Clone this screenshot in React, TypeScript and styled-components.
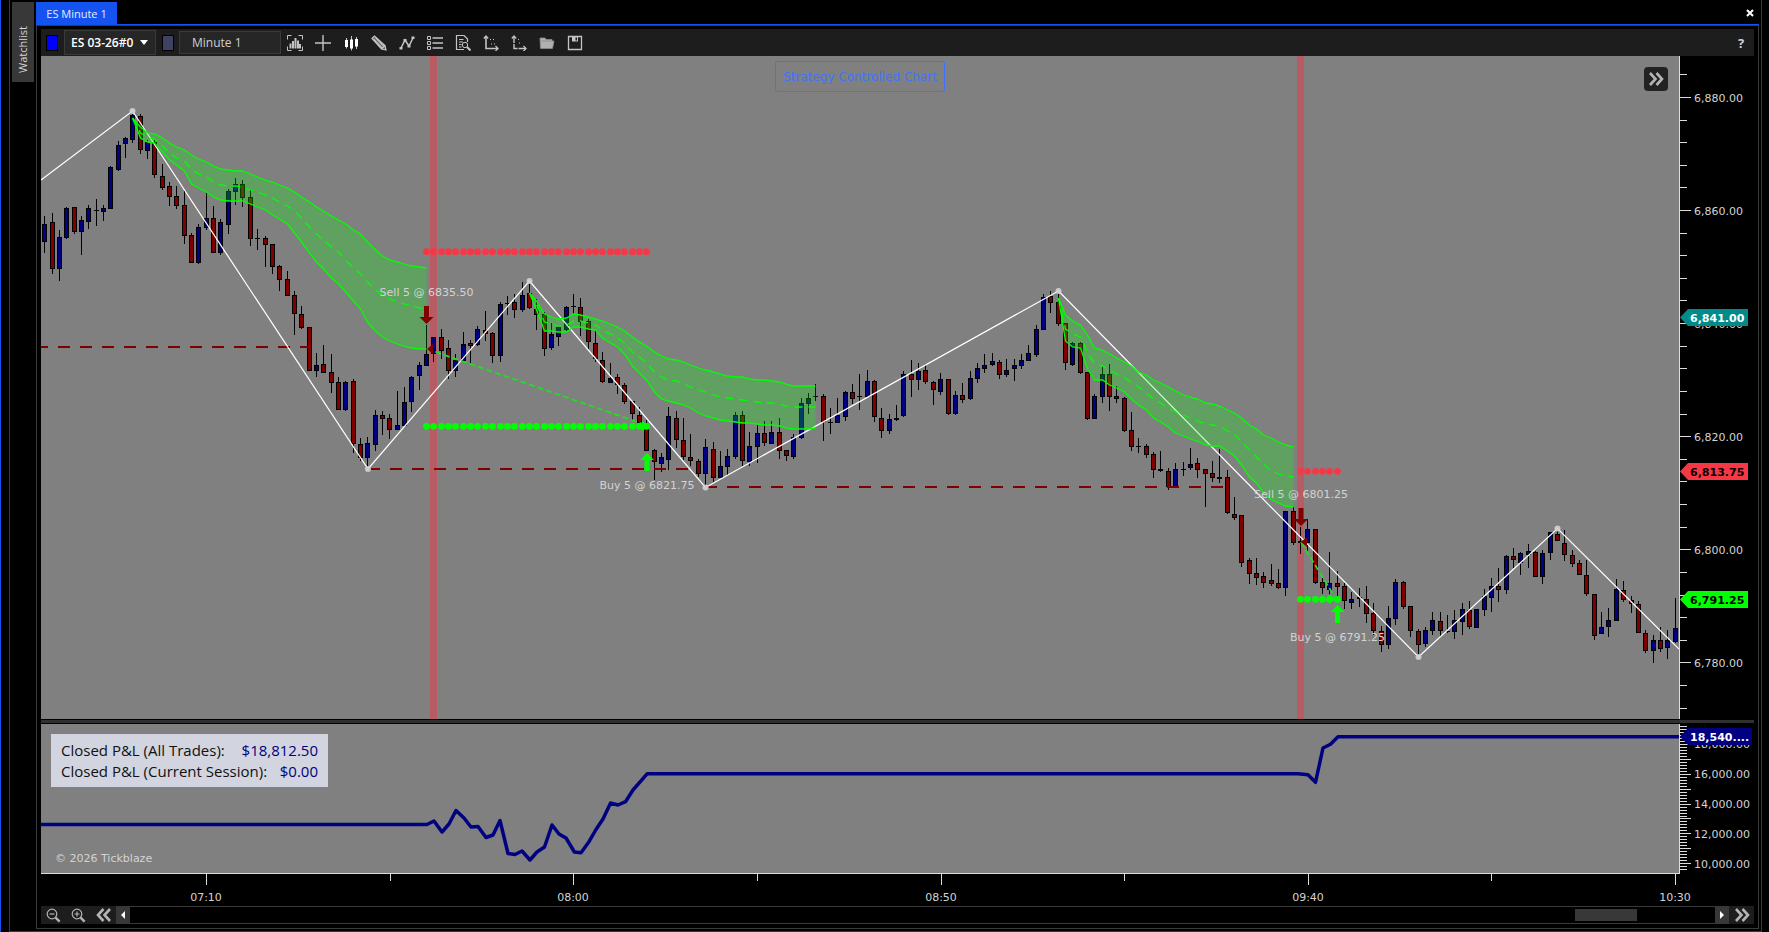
import React, { useLayoutEffect, useRef, useState } from 'react';
import styled, { createGlobalStyle } from 'styled-components';

const UI_FONT = '"Open Sans", "Noto Sans", sans-serif';
const CHART_FONT = '"DejaVu Sans", Verdana, sans-serif';

const color = {
  accent: '#1453f0',
  line: '#3a3a3a',
  panel: '#1d1d1d',
  raised: '#383838',
  plot: '#808080',
  axis: '#dcdcdc',
  label: '#d3d3d3',
  up: '#000080',
  down: '#800000',
  lime: '#00ff00',
  stop: '#f73746',
  teal: '#008b8b',
};

const GlobalStyle = createGlobalStyle`
  * { box-sizing: border-box; }
  html, body { margin: 0; background: #000; }
  button, input, select { font: inherit; color: inherit; border: 0; margin: 0; padding: 0; border-radius: 0; background: none; }
`;

/* ---------- data ---------- */

// The plots are designed on these sizes and stretch with the window.
const PLOT_W = 1638;
const PRICE_H = 663;
const PNL_H = 149;
const PRICE_TOP = 56;
const PNL_TOP = 724;
const PLOT_LEFT = 41;
const BAR_STEP = 7.344;
const FIRST_BAR = 3.7;

// One bar per minute: b = up, r = down, d = unchanged; then high, body top, body bottom, low.
const BARS = `
b216,224,242,253 r213,222,269,274 b230,237,269,281 b207,208,238,239 r207,207,232,234 b216,220,232,255 b205,208,222,229 d199,210,211,226
b205,208,212,221 b166,167,209,209 b141,145,170,171 b137,138,144,158 b112,115,140,143 r114,116,150,154 b140,142,151,159 r140,142,175,178
r164,176,188,190 r182,186,197,206 r186,196,206,209 r191,205,236,244 r233,235,263,263 b224,227,263,264 b193,218,228,230 r206,218,253,253
b219,222,253,255 b189,191,225,234 b178,184,192,205 r180,184,198,207 r190,197,239,246 d229,238,239,250 r236,238,245,267 r244,244,267,274
r265,266,280,291 r271,279,296,296 r291,295,314,335 r306,314,328,329 r327,327,371,371 b353,365,371,377 r345,364,373,373 r354,372,383,393
r377,382,410,410 b381,382,410,411 r379,381,444,453 r438,444,458,461 b437,443,458,469 b410,415,445,451 r411,415,419,435 r414,418,430,439
b391,425,430,430 b387,402,426,426 b376,377,402,412 b362,365,376,390 b325,354,366,366 b337,337,354,362 r329,337,351,359 r340,348,371,379
b354,360,371,377 b332,344,361,361 r340,343,346,363 b326,329,345,346 r311,330,334,341 r332,333,356,363 b302,304,356,362 d296,303,304,315
r294,302,310,318 b282,295,310,312 r281,293,308,309 r299,309,315,330 r312,314,349,356 b323,334,348,350 b326,327,337,346 b306,307,330,332
d294,306,307,314 r298,307,322,336 r319,321,342,349 r330,343,359,362 r352,360,382,383 b363,378,383,383 r374,377,385,394 r383,385,402,404
r401,401,414,421 r407,415,423,423 r420,427,451,451 r449,450,462,480 b453,457,464,472 b407,416,460,470 r411,418,440,448 r418,440,457,460
r434,457,461,466 r459,461,474,477 b439,447,474,487 r442,449,478,482 b451,466,478,478 b449,456,467,475 b412,415,457,459 r411,415,461,466
b432,446,462,466 b425,433,447,463 r421,433,443,446 b421,432,444,444 r418,432,451,459 r450,450,456,461 b434,437,457,459 b398,403,438,439
b393,398,404,414 d384,396,397,401 r394,396,422,441 d408,422,423,434 b398,415,423,423 b391,392,417,421 r384,392,399,404 d374,396,397,410
b370,381,397,397 r380,381,417,422 r408,418,431,438 b414,419,431,434 d405,418,420,421 b371,374,416,417 r360,374,380,397 b363,371,380,390
r364,370,382,384 r381,382,390,405 b373,379,392,395 r379,379,414,415 b391,395,414,415 r383,395,400,403 b371,378,399,400 b363,368,379,383
b354,365,369,373 b353,361,365,366 r360,362,375,379 b359,370,375,377 b359,365,369,381 b354,360,366,369 b345,353,361,361 b325,329,355,357
b294,297,330,330 r291,296,303,313 r291,302,324,326 r323,323,363,370 b342,343,365,366 r342,343,373,374 r372,372,419,420 b394,396,419,419
b367,374,397,403 r364,374,397,411 r386,396,399,403 r397,398,431,432 r412,430,447,451 d438,446,447,453 r444,446,455,458 r452,454,470,478
d451,469,471,472 r468,471,487,490 b463,469,487,487 d462,469,470,476 b448,464,468,470 r458,463,470,478 r469,469,474,507 r461,473,478,482
d449,477,479,483 r470,477,513,514 r497,514,518,520 r515,515,563,567 r558,560,574,584 r558,573,578,585 r572,576,583,588 r564,580,584,586
r569,583,588,589 b511,511,588,596 r507,511,543,545 d527,541,543,554 b519,529,543,553 r529,529,583,584 r578,582,588,594 b552,583,590,596
r571,583,587,597 r583,586,601,609 b592,599,603,609 b588,597,599,607 r586,599,614,623 r603,613,631,635 r626,631,645,652 b606,618,645,649
b579,582,619,625 r581,582,607,609 r606,606,631,637 r629,631,645,655 b627,630,644,647 b612,620,631,635 r612,621,631,637 d615,631,632,633
b610,620,632,639 b603,609,622,635 r601,610,627,629 b609,609,628,628 b589,596,610,616 b578,586,598,612 r568,586,590,602 b555,556,590,594
r548,556,560,568 b552,553,563,575 b544,551,555,568 r551,552,577,577 b550,553,577,584 b532,532,553,560 r529,534,541,541 r530,543,555,561
r550,555,564,567 r560,563,575,575 r560,575,594,596 r594,594,636,640 b612,627,634,634 b608,620,627,637 b579,589,621,621 r581,590,600,602
r596,600,604,613 r601,604,633,633 r630,633,651,653 b635,640,651,663 r627,640,649,652 b630,640,648,659 b598,628,642,643
`
  .trim()
  .split(/\s+/)
  .map((s) => ({ kind: s[0], y: s.slice(1).split(',').map(Number) }));

// Anchored VWAP bands: upper, middle and lower level for every bar from the anchor on.
const BANDS = [
  {
    from: 12,
    rows: `118,118,118 127,133,138 133,137,142 134,139,143 138,146,152 143,153,160 147,158,165 150,161,171 155,169,184 159,174,188
    162,177,192 166,182,197 169,185,200 170,186,201 171,186,201 171,187,201 174,190,204 177,192,207 180,195,210 182,198,215
    185,202,219 188,206,224 192,211,233 197,218,242 202,227,253 207,234,262 211,240,269 216,247,278 220,252,284 224,260,292
    230,268,301 234,274,309 242,282,322 250,290,331 256,295,337 260,299,341 262,302,344 264,304,346 266,306,348 267,308,349 268,309,349`,
  },
  {
    from: 66,
    rows: `293,293,293 301,305,310 314,322,331 317,324,331 319,326,332 318,325,332 314,321,327 315,321,327 317,323,329 319,325,330
    321,330,338 324,334,343 327,338,347 331,343,354 337,352,366 342,357,373 346,363,380 352,372,392 356,377,399 359,380,401
    360,381,403 362,384,405 365,387,408 368,390,413 370,392,416 372,395,418 374,397,420 376,398,421 377,399,422 377,400,423
    379,401,423 380,402,424 380,403,425 381,403,425 382,404,426 384,406,428 386,407,429 386,407,429 386,407,429 386,407,428`,
  },
  {
    from: 138,
    rows: `298,298,298 315,329,341 321,334,347 325,337,348 335,352,369 348,364,380 350,366,380 354,370,385 358,374,388 362,378,392
    366,382,399 372,387,405 375,393,410 380,399,418 383,403,422 387,408,427 391,412,433 395,415,436 397,418,439 399,421,441
    403,424,445 404,425,446 406,426,446 410,431,451 413,434,456 418,442,465 425,450,477 429,457,483 435,464,493 438,471,500
    442,474,503 445,476,506 447,477,507`,
  },
].map((b) => ({ from: b.from, rows: b.rows.trim().split(/\s+/).map((r) => r.split(',').map(Number)) }));

type Pt = [number, number];

const SWINGS: Pt[] = [
  [41, 180], [132.5, 111], [368, 469], [529.5, 281], [705.5, 487.5], [1058.5, 291], [1418.5, 657], [1557.5, 528.5], [1679, 649],
];

const SUPPORTS = [
  { x1: 41, x2: 309, y: 347, offset: 5 },
  { x1: 368, x2: 692, y: 469, offset: 0 },
  { x1: 705, x2: 1223, y: 487, offset: 0 },
];

const SESSIONS = [430, 1297];

const LEVELS = [
  { from: 52, to: 82, y: 251.7, fill: color.stop },
  { from: 52, to: 82, y: 426.3, fill: color.lime },
  { from: 171, to: 176, y: 471.3, fill: color.stop },
  { from: 171, to: 176, y: 599.3, fill: color.lime },
];

const TRADES = [
  { side: 'sell', text: 'Sell 5 @ 6835.50', x: 426.5, tip: 324, textY: 296 },
  { side: 'buy', text: 'Buy 5 @ 6821.75', x: 647, tip: 453, textY: 489 },
  { side: 'sell', text: 'Sell 5 @ 6801.25', x: 1301, tip: 526, textY: 498 },
  { side: 'buy', text: 'Buy 5 @ 6791.25', x: 1337.5, tip: 605, textY: 641 },
];

const TRADE_LINES = [
  { a: [427, 349] as Pt, b: [649, 426] as Pt },
  { a: [1301, 542] as Pt, b: [1336, 599] as Pt },
];

const PNL_LINE: Pt[] = [
  [41, 824.5], [427, 824.5], [434, 821], [442, 832], [449, 824], [456, 810.5], [464, 818], [471, 827], [478, 826.5], [486, 837.5],
  [493, 835], [500, 820.5], [508, 853.5], [515, 854.5], [522, 851], [530, 860], [537, 852], [544.5, 847], [552, 825], [559, 834],
  [566, 838], [574.4, 852], [581, 852.7], [589, 841.7], [595.7, 830], [603, 819], [610.6, 803], [618, 805], [625.5, 801.7],
  [633, 790], [647.3, 773.7], [1298, 773.7], [1308, 774.7], [1315.5, 782.3], [1323, 748], [1330.5, 744.3], [1338, 736.7], [1679, 736.7],
];

const TIMES = ['07:10', '08:00', '08:50', '09:40', '10:30'];

/* ---------- layout ---------- */

const Desktop = styled.div`
  display: flex;
  height: 100vh;
  min-height: 480px;
  padding: 0 7px 0 8px;
  border-left: 1px solid ${color.accent};
  background: #000;
  font-family: ${UI_FONT};
`;

const Shell = styled.div`
  flex: 1;
  min-width: 0;
  display: flex;
  padding: 2px 2px 2px;
  border: 1px solid ${color.line};
  border-top: 0;
`;

const Rail = styled.nav`
  width: 24px;
  flex: none;
`;

const RailTab = styled.button`
  width: 22px;
  height: 80px;
  background: ${color.raised};
  color: ${color.label};
  font-size: 11px;
  line-height: 22px;
  writing-mode: vertical-rl;
  transform: rotate(180deg);
  text-align: left;
  padding-top: 9px;
`;

const Main = styled.main`
  flex: 1;
  min-width: 0;
  display: flex;
  flex-direction: column;
`;

const TabStrip = styled.div`
  height: 23px;
  flex: none;
  display: flex;
  justify-content: space-between;
  border-bottom: 1px solid ${color.accent};
`;

const Tab = styled.button`
  width: 81px;
  background: ${color.accent};
  color: #e8ecff;
  font-size: 11px;
`;

const CloseButton = styled.button`
  width: 18px;
  display: grid;
  place-items: center;
  color: #fff;
`;

const Frame = styled.section`
  flex: 1;
  min-height: 0;
  display: flex;
  flex-direction: column;
  padding: 3px 4px 4px;
  border: 1px solid ${color.line};
`;

const Toolbar = styled.div`
  height: 27px;
  flex: none;
  display: flex;
  align-items: center;
  padding-left: 5px;
  background: ${color.panel};
  color: #cfcfcf;
`;

const Swatch = styled.button<{ $fill: string }>`
  width: 12px;
  height: 16px;
  border: 1px solid #000;
  background: ${(p) => p.$fill};
`;

const Picker = styled.label`
  position: relative;
  display: flex;
  align-items: center;
  width: 92px;
  height: 25px;
  margin: 0 6px;
  border: 1px solid ${color.line};
  background: #262626;
`;

const PickerSelect = styled.select`
  appearance: none;
  width: 100%;
  height: 100%;
  padding-left: 6px;
  color: #fff;
  font-size: 12px;
  font-weight: 600;
`;

const Caret = styled.svg`
  position: absolute;
  right: 7px;
  pointer-events: none;
`;

const Interval = styled.input`
  width: 102px;
  height: 23px;
  margin: 0 0 0 5px;
  padding-left: 12px;
  border: 1px solid ${color.line};
  background: #262626;
  font-size: 12px;
`;

const IconRow = styled.div`
  flex: 1;
  display: flex;
`;

const IconButton = styled.button`
  width: 28px;
  height: 27px;
  display: grid;
  place-items: center;
  color: #c4c4c4;
`;

const HelpButton = styled.button`
  width: 26px;
  font-size: 13px;
  font-weight: 700;
`;

const ChartGrid = styled.div`
  flex: 1;
  min-height: 0;
  display: grid;
  grid-template-columns: minmax(0, 1fr) 75px;
  grid-template-rows: minmax(0, 663fr) 5px minmax(0, 149fr) 33px;
`;

const Plot = styled.div`
  position: relative;
  min-width: 0;
  min-height: 0;
  overflow: hidden;
  background: ${color.plot};
`;

const Scale = styled.div`
  min-height: 0;
  overflow: hidden;
  border-left: 1px solid ${color.axis};
`;

const TimeScale = styled.div`
  grid-column: 1 / -1;
  overflow: hidden;
`;

const Splitter = styled.div`
  grid-column: 1 / -1;
  border: solid #000;
  border-width: 1px 0;
  background: #303030;
`;

const Drawing = styled.svg`
  display: block;
  width: 100%;
  height: 100%;
  font-family: ${CHART_FONT};
  font-size: 11px;
`;

const Banner = styled.div`
  position: absolute;
  top: 5px;
  left: 50%;
  transform: translateX(-50%);
  width: 170px;
  height: 31px;
  border: 1px solid #3f73ff;
  border-radius: 2px;
  color: #3f73ff;
  font: 12px/31px ${CHART_FONT};
  text-align: center;
  white-space: nowrap;
`;

const ExpandButton = styled.button`
  position: absolute;
  top: 11px;
  right: 11px;
  width: 24px;
  height: 24px;
  border-radius: 4px;
  background: #222;
  color: #b4b4b4;
  display: grid;
  place-items: center;
`;

const Summary = styled.dl`
  position: absolute;
  top: 10px;
  left: 10px;
  width: 277px;
  margin: 0;
  padding: 6px 10px 5px;
  background: #d2d5df;
  color: #111;
  font-size: 15px;
  line-height: 21px;
`;

const SummaryRow = styled.div`
  display: flex;
  justify-content: space-between;
  white-space: nowrap;

  dd { margin: 0; color: ${color.up}; }
`;

const Copyright = styled.small`
  position: absolute;
  left: 14px;
  bottom: 7px;
  color: ${color.label};
  font: 11px/14px ${CHART_FONT};
`;

const ScrollRow = styled.div`
  height: 18px;
  flex: none;
  display: flex;
`;

const ScrollTool = styled.button<{ $raised?: boolean }>`
  width: ${(p) => (p.$raised ? 14 : 25)}px;
  flex: none;
  display: grid;
  place-items: center;
  background: ${(p) => (p.$raised ? color.raised : color.panel)};
  color: ${(p) => (p.$raised ? '#fff' : '#b4b4b4')};
`;

const Track = styled.div`
  flex: 1;
  display: flex;
  justify-content: flex-end;
  align-items: center;
  padding-right: 78px;
  border: solid ${color.line};
  border-width: 1px 0;
`;

const Thumb = styled.div`
  width: 62px;
  height: 12px;
  background: ${color.raised};
`;

/* ---------- drawing helpers ---------- */

function useSize(w: number, h: number) {
  const ref = useRef<HTMLDivElement>(null);
  const [size, setSize] = useState({ w, h });
  useLayoutEffect(() => {
    const el = ref.current;
    if (!el) return;
    const read = () => setSize({ w: el.clientWidth, h: el.clientHeight });
    read();
    const watcher = new ResizeObserver(read);
    watcher.observe(el);
    return () => watcher.disconnect();
  }, []);
  return { ref, ...size };
}

const toPoints = (pts: Pt[]) => pts.map((p) => p.join(',')).join(' ');

function PricePlot() {
  const { ref, w, h } = useSize(PLOT_W, PRICE_H);
  const kx = w / PLOT_W;
  const ky = h / PRICE_H;
  const x = (v: number) => (v - PLOT_LEFT) * kx;
  const y = (v: number) => (v - PRICE_TOP) * ky;
  const barX = (i: number) => Math.floor((FIRST_BAR + i * BAR_STEP) * kx);
  const px = (v: number) => Math.round(y(v));

  return (
    <Plot ref={ref}>
      <Drawing role="img" aria-label="ES 03-26 one minute price chart">
        {SESSIONS.map((s) => (
          <rect key={s} x={x(s)} y={0} width={7} height={h} fill="#f23645" fillOpacity={0.5} />
        ))}
        {BARS.map((bar, i) => {
          const [hi, top, bottom, lo] = bar.y.map(px);
          const cx = barX(i);
          const bodyH = Math.max(1, bottom - top);
          return (
            <g key={i} shapeRendering="crispEdges">
              <rect x={cx} y={hi} width={1} height={Math.max(1, lo - hi)} fill="#000" />
              <rect x={cx - 2} y={top} width={5} height={bodyH} fill="#000" />
              {bar.kind !== 'd' && bodyH > 2 && (
                <rect x={cx - 1} y={top + 1} width={3} height={bodyH - 2} fill={bar.kind === 'b' ? color.up : color.down} />
              )}
            </g>
          );
        })}
        {SUPPORTS.map((s) => (
          <line key={s.y} x1={x(s.x1)} x2={x(s.x2)} y1={px(s.y)} y2={px(s.y)} stroke={color.down} strokeWidth={2} strokeDasharray="12 10" strokeDashoffset={s.offset} />
        ))}
        <polyline points={toPoints(SWINGS.map(([a, b]) => [x(a), y(b)]))} fill="none" stroke="#fff" strokeWidth={1.2} />
        {SWINGS.slice(1, -1).map(([a, b]) => (
          <circle key={a} cx={x(a)} cy={y(b)} r={3} fill={color.label} fillOpacity={0.9} />
        ))}
        {BANDS.map((band) => {
          const edge = (k: number) => band.rows.map((r, i): Pt => [barX(band.from + i) + 0.5, y(r[k])]);
          return (
            <g key={band.from} fill="none" stroke={color.lime} strokeWidth={1.3}>
              <polygon points={toPoints([...edge(0), ...edge(2).reverse()])} fill={color.lime} fillOpacity={0.25} stroke="none" />
              <polyline points={toPoints(edge(0))} />
              <polyline points={toPoints(edge(2))} />
              <polyline points={toPoints(edge(1))} strokeDasharray="8 6" />
            </g>
          );
        })}
        {LEVELS.map((l) =>
          Array.from({ length: l.to - l.from + 1 }, (_, n) => (
            <circle key={`${l.y}-${n}`} cx={barX(l.from + n) + 0.5} cy={y(l.y)} r={3.4} fill={l.fill} />
          )),
        )}
        {TRADE_LINES.map(({ a, b }) => {
          const [ax, ay, bx, by] = [x(a[0]), y(a[1]), x(b[0]), y(b[1])];
          return (
            <g key={a[0]}>
              <line x1={ax} y1={ay} x2={bx} y2={by} stroke="#22dd22" strokeWidth={1.8} strokeDasharray="6 3" />
              <polygon points={`${ax},${ay} ${ax + 6},${ay - 5} ${ax + 6},${ay + 5}`} fill={color.down} />
              <polygon points={`${bx},${by} ${bx - 7},${by - 5} ${bx - 7},${by + 5}`} fill={color.lime} />
            </g>
          );
        })}
        {TRADES.map((t) => {
          const cx = x(t.x);
          const d = t.side === 'sell' ? -1 : 1;
          const ty = y(t.tip);
          return (
            <g key={t.text}>
              <path
                d={`M${cx} ${ty}l7 ${d * 7}h-4.5v${d * 11}h-5v${d * -11}h-4.5z`}
                fill={t.side === 'sell' ? color.down : color.lime}
              />
              <text x={cx} y={y(t.textY)} fill={color.label} textAnchor="middle">{t.text}</text>
            </g>
          );
        })}
      </Drawing>
      <Banner>Strategy Controlled Chart</Banner>
      <ExpandButton aria-label="Show panel"><Chevrons /></ExpandButton>
    </Plot>
  );
}

function PriceTag({ y, text, fill, ink = '#000', width = 68 }: { y: number; text: string; fill: string; ink?: string; width?: number }) {
  const t = Math.round(y) - 8;
  return (
    <g>
      <path d={`M0 ${t + 8.5}L8 ${t}H${width}V${t + 17}H8z`} fill={fill} />
      <text x={10} y={t + 13} fill={ink} fontWeight={700}>{text}</text>
    </g>
  );
}

function PriceScale() {
  const { ref, h } = useSize(74, PRICE_H);
  const ky = h / PRICE_H;
  const y = (price: number) => Math.floor((41.4 + (6880 - price) * 5.655) * ky);
  const ticks = Array.from({ length: 29 }, (_, i) => 6884 - i * 4);
  return (
    <Scale ref={ref}>
      <Drawing role="img" aria-label="Price scale">
        {ticks.map((p) => (
          <rect key={p} x={0} y={y(p)} width={p % 20 ? 7 : 11} height={1} fill={color.axis} />
        ))}
        {ticks.filter((p) => p % 20 === 0).map((p) => (
          <text key={p} x={14} y={y(p) + 5} fill={color.label}>{`6,${p - 6000}.00`}</text>
        ))}
        <PriceTag y={261 * ky} text="6,841.00" fill={color.teal} ink="#fff" />
        <PriceTag y={415 * ky} text="6,813.75" fill={color.stop} />
        <PriceTag y={543 * ky} text="6,791.25" fill={color.lime} />
      </Drawing>
    </Scale>
  );
}

function PnlPlot() {
  const { ref, w, h } = useSize(PLOT_W, PNL_H);
  const pts = PNL_LINE.map(([a, b]): Pt => [((a - PLOT_LEFT) * w) / PLOT_W, ((b - PNL_TOP) * h) / PNL_H]);
  return (
    <Plot ref={ref}>
      <Drawing role="img" aria-label="Closed profit and loss">
        <polyline points={toPoints(pts)} fill="none" stroke={color.up} strokeWidth={3.5} strokeLinejoin="round" />
      </Drawing>
      <Summary>
        <SummaryRow><dt>Closed P&amp;L (All Trades):</dt><dd>$18,812.50</dd></SummaryRow>
        <SummaryRow><dt>Closed P&amp;L (Current Session):</dt><dd>$0.00</dd></SummaryRow>
      </Summary>
      <Copyright>© 2026 Tickblaze</Copyright>
    </Plot>
  );
}

function PnlScale() {
  const { ref, h } = useSize(74, PNL_H);
  const ky = h / PNL_H;
  const y = (v: number) => (140.2 - (v - 10000) * 0.0149) * ky;
  const ticks = Array.from({ length: 49 }, (_, i) => 9600 + i * 200);
  return (
    <Scale ref={ref}>
      <Drawing role="img" aria-label="Profit and loss scale">
        {ticks.map((v) => (
          <rect key={v} x={0} y={Math.round(y(v)) - 1} width={v % 1000 ? 7 : 11} height={1} fill={color.axis} />
        ))}
        {[10, 12, 14, 16, 18].map((v) => (
          <text key={v} x={14} y={Math.floor(y(v * 1000)) + 4} fill={color.label}>{`${v},000.00`}</text>
        ))}
        <PriceTag y={12 * ky} text="18,540...." fill={color.up} ink="#fff" width={72} />
      </Drawing>
    </Scale>
  );
}

function TimeAxis() {
  const { ref, w } = useSize(PLOT_W + 75, 33);
  const plotW = w - 75;
  const at = (minute: number) => Math.round(((FIRST_BAR + (22 + minute) * BAR_STEP) * plotW) / PLOT_W);
  return (
    <TimeScale ref={ref}>
      <Drawing role="img" aria-label="Time scale">
        <rect x={0} y={0} width={plotW + 1} height={1} fill={color.axis} />
        {Array.from({ length: 9 }, (_, i) => (
          <rect key={i} x={at(i * 25)} y={0} width={1} height={i % 2 ? 8 : 12} fill={color.axis} />
        ))}
        {TIMES.map((t, i) => (
          <text key={t} x={at(i * 50)} y={28} fill={color.label} textAnchor="middle">{t}</text>
        ))}
      </Drawing>
    </TimeScale>
  );
}

/* ---------- icons ---------- */

const Chevrons = ({ left }: { left?: boolean }) => (
  <svg width="16" height="14" viewBox="0 0 16 14" fill="none" stroke="currentColor" strokeWidth="2.6">
    <path d={left ? 'M7.500 1L2 7l5.500 6M14 1L8.500 7l5.500 6' : 'M2 1l5.500 6L2 13M8.500 1L14 7l-5.500 6'} />
  </svg>
);

const Magnifier = ({ plus }: { plus?: boolean }) => (
  <svg width="15" height="15" viewBox="0 0 15 15" fill="none" stroke="currentColor">
    <circle cx="6" cy="6" r="4.8" strokeWidth="1.2" />
    <path d={plus ? 'M3.5 6h5M6 3.5v5' : 'M3.5 6h5'} strokeWidth="1.2" />
    <path d="M9.6 9.6l4 4" strokeWidth="2.4" />
  </svg>
);

const TOOLS: { label: string; art: React.ReactNode }[] = [
  {
    label: 'Chart area',
    art: (
      <>
        <path d="M.5 4.500V.5h4M11.500 .5h4v4M15.500 11.500v4h-4M4.500 15.500h-4v-4" />
        <path d="M3.500 13.500V8.500M6 13.500V6M8.500 13.500V3M11 13.500V5.500M13 13.500V9" strokeWidth="2" />
      </>
    ),
  },
  { label: 'Crosshair', art: <path d="M8 0v16M0 8h16" strokeWidth="1.4" /> },
  {
    label: 'Chart style',
    art: (
      <>
        <path d="M3.500 3v10.500M8.500 1v14.500M13.500 2v12" />
        <path d="M3.500 5v7M8.500 4.500v9M13.500 4v7.500" strokeWidth="3" stroke="#fff" />
      </>
    ),
  },
  {
    label: 'Drawing tools',
    art: (
      <>
        <path d="M1 3.500L3.500 1 14 10.500l1 4.500-4.500-1z" fill="#666" strokeWidth="1.2" />
        <path d="M2.500 4l9 9.500M4.500 2.500l8.500 9M10.500 14l3.500-3.500" strokeWidth="1.1" />
      </>
    ),
  },
  {
    label: 'Indicators',
    art: (
      <>
        <path d="M2 13l4-8 4 6 4-8" strokeWidth="1.5" />
        <path d="M.5 12h3v2.500h-3zM4.500 4h3v2.500h-3zM8.500 10h3v2.500h-3zM12.500 1.500h3V4h-3z" fill="currentColor" stroke="none" />
      </>
    ),
  },
  {
    label: 'Objects',
    art: (
      <>
        <path d="M.5 1.500h3v3h-3zM.5 6.500h3v3h-3zM.5 11.500h3v3h-3z" strokeWidth="1" />
        <path d="M5.500 3h10.500M5.500 8h10.500M5.500 13h10.500" strokeWidth="1.3" />
      </>
    ),
  },
  {
    label: 'Data window',
    art: (
      <>
        <path d="M9 14.500H1.500v-14H9l3.500 3.500v3M4 4.500h4.500M4 7h4M4 9.500h2.500M4 12h2.500" strokeWidth="1.2" />
        <circle cx="10" cy="10" r="2.700" />
        <path d="M12 12l3.500 3.500" strokeWidth="2" />
      </>
    ),
  },
  {
    label: 'Scale fixed',
    art: (
      <>
        <path d="M3 1v12.500h12" strokeWidth="1.600" />
        <path d="M.8 3.500L3 1l2.200 2.500M12.500 11l2.500 2.500-2.500 2.500" strokeWidth="1.300" />
        <path d="M7 4.500h4M8 9h4" strokeDasharray="1 2" />
      </>
    ),
  },
  {
    label: 'Scale free',
    art: (
      <>
        <path d="M3 1v9M3 10v3.500h11" strokeWidth="1.400" strokeDasharray="7 1" />
        <path d="M.8 3.500L3 1l2.200 2.500M12.500 11l2.500 2.500-2.500 2.500" strokeWidth="1.300" />
        <path d="M7 4.500h2M8 8h3" strokeDasharray="1 2" />
      </>
    ),
  },
  {
    label: 'Open template',
    art: <path d="M1.500 13.500L1 3h5l1 1.500h6V6h2l-1.500 7.500zM2.500 6h11" fill="#b0b0b0" stroke="#8a8a8a" strokeWidth="0.800" />,
  },
  {
    label: 'Save template',
    art: (
      <>
        <path d="M1.500 1.500h13v13h-13z" strokeWidth="1.300" />
        <path d="M5 1.500h6v5H5z" fill="currentColor" stroke="none" />
        <path d="M8.500 2.500h1.500v3H8.500z" fill="#1d1d1d" stroke="none" />
      </>
    ),
  },
];

/* ---------- page ---------- */

export default function App() {
  return (
    <>
      <GlobalStyle />
      <Desktop>
        <Shell>
          <Rail><RailTab>Watchlist</RailTab></Rail>
          <Main>
            <TabStrip role="tablist">
              <Tab role="tab" aria-selected="true">ES Minute 1</Tab>
              <CloseButton aria-label="Close">
                <svg width="8" height="8" viewBox="0 0 8 8" stroke="currentColor" strokeWidth="2"><path d="M1 1l6 6M7 1L1 7" /></svg>
              </CloseButton>
            </TabStrip>
            <Frame>
              <Toolbar role="toolbar" aria-label="Chart">
                <Swatch $fill="#0000ff" aria-label="Symbol link" />
                <Picker>
                  <PickerSelect aria-label="Symbol" defaultValue="es">
                    <option value="es">ES 03-26#0</option>
                  </PickerSelect>
                  <Caret width="8" height="5" viewBox="0 0 8 5"><path d="M0 0h8L4 5z" fill="#fff" /></Caret>
                </Picker>
                <Swatch $fill="#3e4361" aria-label="Interval link" />
                <Interval aria-label="Interval" defaultValue="Minute 1" />
                <IconRow>
                  {TOOLS.map((t) => (
                    <IconButton key={t.label} aria-label={t.label}>
                      <svg width="16" height="16" viewBox="0 0 16 16" fill="none" stroke="currentColor">{t.art}</svg>
                    </IconButton>
                  ))}
                </IconRow>
                <HelpButton>?</HelpButton>
              </Toolbar>
              <ChartGrid>
                <PricePlot />
                <PriceScale />
                <Splitter />
                <PnlPlot />
                <PnlScale />
                <TimeAxis />
              </ChartGrid>
              <ScrollRow>
                <ScrollTool aria-label="Zoom out"><Magnifier /></ScrollTool>
                <ScrollTool aria-label="Zoom in"><Magnifier plus /></ScrollTool>
                <ScrollTool aria-label="Page back"><Chevrons left /></ScrollTool>
                <ScrollTool $raised aria-label="Scroll left">
                  <svg width="4" height="8" viewBox="0 0 4 8"><path d="M4 0v8L0 4z" fill="currentColor" /></svg>
                </ScrollTool>
                <Track><Thumb /></Track>
                <ScrollTool $raised aria-label="Scroll right">
                  <svg width="4" height="8" viewBox="0 0 4 8"><path d="M0 0v8l4-4z" fill="currentColor" /></svg>
                </ScrollTool>
                <ScrollTool aria-label="Go to latest"><Chevrons /></ScrollTool>
              </ScrollRow>
            </Frame>
          </Main>
        </Shell>
      </Desktop>
    </>
  );
}
